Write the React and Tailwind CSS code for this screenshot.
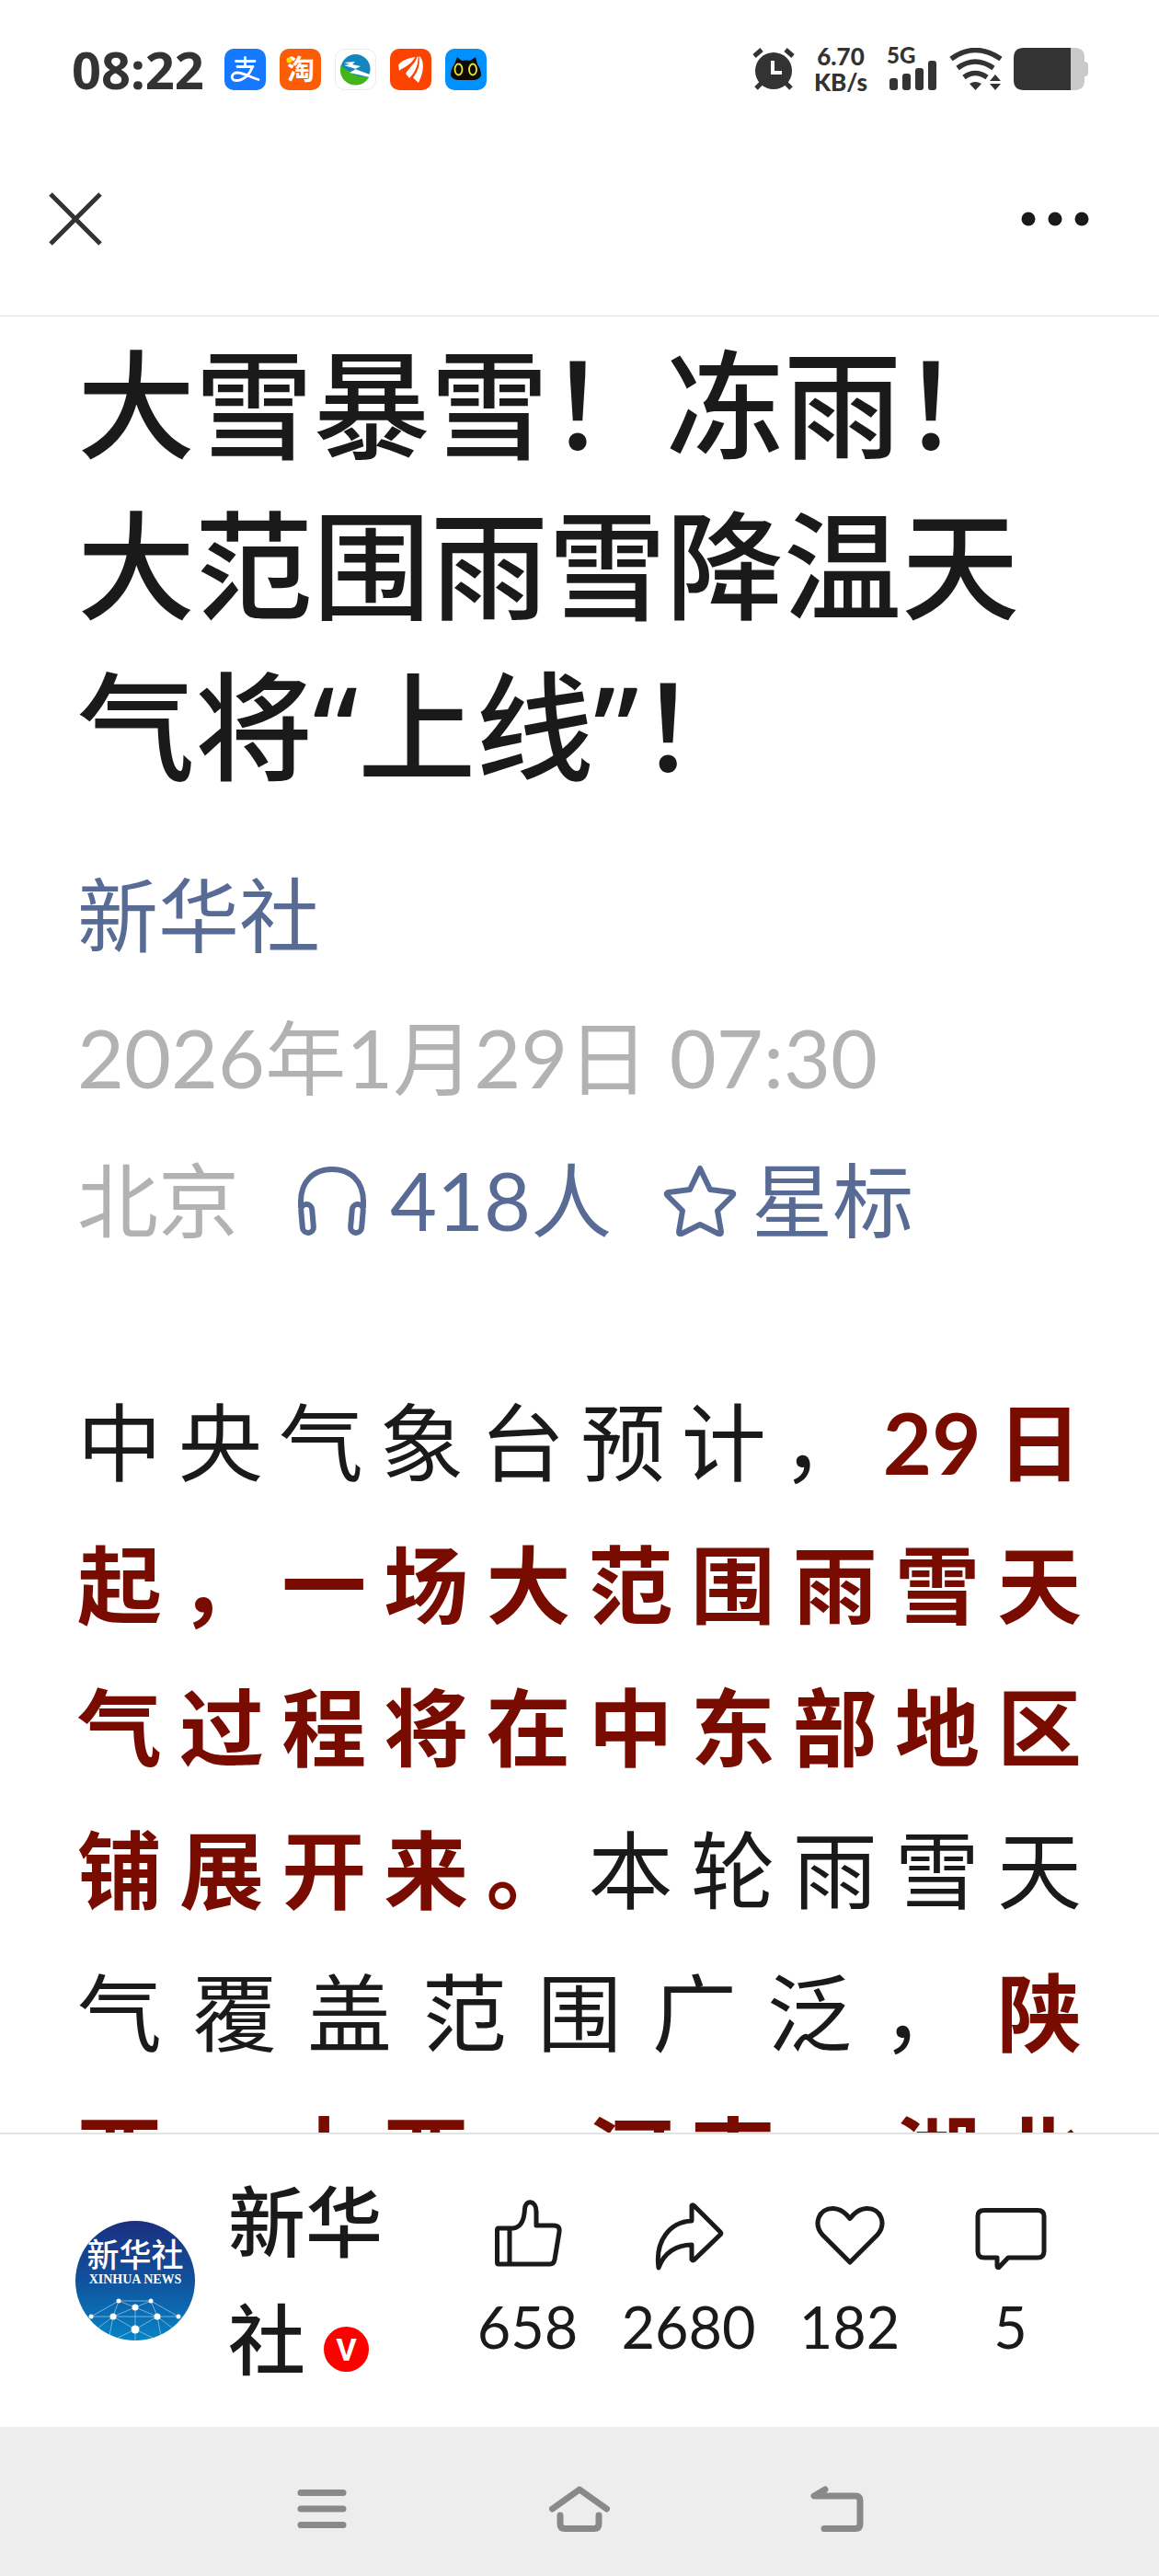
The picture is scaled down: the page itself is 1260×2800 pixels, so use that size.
const actions = [
  { id: 'like', label: '点赞', count: 658, Icon: LikeIcon },
  { id: 'share', label: '转发', count: 2680, Icon: ShareIcon },
  { id: 'heart', label: '推荐', count: 182, Icon: HeartIcon },
  { id: 'comment', label: '留言', count: 5, Icon: CommentIcon },
]

function LikeIcon() {
  return (
    <svg viewBox="0 0 80 80" className="size-20" fill="none" stroke="currentColor" strokeWidth="5" strokeLinejoin="round" strokeLinecap="round">
      <path d="M8 33H24C33 32 36 22 36.500 12C37 1.500 49 2 49 15V30H68Q75 30 74 37L69 67Q68 72 64 72H8Q6.500 72 6.500 70V35Q6.500 33 8 33Z" />
      <path d="M20 34V71" />
    </svg>
  )
}

function ShareIcon() {
  return (
    <svg viewBox="0 0 80 80" className="size-20" fill="none" stroke="currentColor" strokeWidth="5" strokeLinejoin="round">
      <path d="M43 25V8.500Q44 7 46 9L74 37Q75.500 38.500 74 40L46 67Q44 69 43 67V51C27 51 13 59 7 76C3 47 19 26 43 25Z" />
    </svg>
  )
}

function HeartIcon() {
  return (
    <svg viewBox="0 0 80 80" className="size-20" fill="none" stroke="currentColor" strokeWidth="5" strokeLinejoin="round">
      <path d="M40 70L10 40C0 28 6 11 22 11.500Q30 12 36 18L40 22.500L44 18Q50 12 58 11.500C74 11 80 28 70 40Z" />
    </svg>
  )
}

function CommentIcon() {
  return (
    <svg viewBox="0 0 80 80" className="size-20" fill="none" stroke="currentColor" strokeWidth="5" strokeLinejoin="round">
      <path d="M11 13.500H69Q76 13.500 76 20V58Q76 65 69 65H37L27 75.500Q25 76 25 74V65H11Q4 65 4 58V20Q4 13.500 11 13.500Z" />
    </svg>
  )
}

function StatusApps() {
  return (
    <div className="flex gap-[15px]">
      <svg viewBox="0 0 45 45" className="size-[45px]">
        <rect width="45" height="45" rx="10" fill="#1677ff" />
        <g fill="none" stroke="#fff" strokeWidth="2.800" strokeLinecap="round">
          <path d="M12.500 13.500H33M22.500 9.500V19M14 19.500H31" />
          <path d="M30.500 19.500C27 29 20 34.500 13 34.500C6 34.500 7 26 14 26C21 26 28 31 37 33.500" />
        </g>
      </svg>
      <svg viewBox="0 0 45 45" className="size-[45px] overflow-visible">
        <rect width="45" height="45" rx="10" fill="#fb5d07" />
        <text x="8" y="33" fontSize="30" fontWeight="700" fill="#fff" fontFamily="Noto Sans CJK SC, sans-serif">淘</text>
        <circle cx="10.500" cy="12.500" r="3" fill="#ffdf00" />
      </svg>
      <svg viewBox="0 0 45 45" className="size-[45px]">
        <rect x="0.500" y="0.500" width="44" height="44" rx="10" fill="#fff" stroke="#ebebeb" />
        <circle cx="22.500" cy="22" r="16" fill="#1286bd" />
        <path d="M7 17C8 22 17 24 21 28Q30 32 38 29A16 16 0 0 1 7 17Z" fill="#43b41c" />
        <path d="M10 15L22 14L19 17L28 19L22 22L38 28V31L16 26L23 22L10 18L16 17Z" fill="#fff" />
      </svg>
      <svg viewBox="0 0 45 45" className="size-[45px]">
        <rect width="45" height="45" rx="10" fill="#fc4300" />
        <g fill="#fff">
          <path d="M27.500 9C20 10 12 13 9 17.500L10 24C14 20 22 19 27.500 9Z" />
          <path d="M29.500 8.500C28 16 20 21 17 27L21 32C26 27 31 19 30.500 8.500Z" />
          <path d="M32.500 8.500C37.500 14 37 25 31 37L25 31.500C30 25 33 18 31.500 8.500Z" />
        </g>
      </svg>
      <svg viewBox="0 0 45 45" className="size-[45px]">
        <rect width="45" height="45" rx="10" fill="#0091ff" />
        <path d="M13 9L18 13Q22.500 12 27 13L33 9L35 17Q39 22 39 29Q37 34 30 34H15Q8 34 6 29Q6 22 10 17Z" fill="#0b0b08" />
        <g fill="none" stroke="#f1e72d" strokeWidth="1.800">
          <ellipse cx="14.500" cy="22.500" rx="4" ry="6" />
          <ellipse cx="30" cy="22.500" rx="4" ry="6" />
        </g>
      </svg>
    </div>
  )
}

function StatusBar() {
  return (
    <div className="flex h-[150px] items-center justify-between pr-[76px] pl-[78px] text-[#333]">
      <div className="flex items-center gap-5">
        <span className="w-[146px] font-['Noto_Sans',sans-serif] text-[56px] leading-[76px] font-bold">08:22</span>
        <StatusApps />
      </div>
      <div className="flex items-center">
        <svg viewBox="0 0 46 46" className="size-[46px]" stroke="#333" strokeWidth="5" fill="none">
          <circle cx="23" cy="25" r="20" fill="#333" stroke="none" />
          <path d="M2 9L10 2M44 9L36 2M10 38L4 44M36 38L42 44" />
          <path d="M22 14V27H32" stroke="#fff" strokeWidth="4" />
        </svg>
        <div className="ml-5 w-[60px] text-center text-[26px] leading-[28px] font-black">
          <div>6.70</div>
          <div>KB/s</div>
        </div>
        <svg viewBox="0 0 54 48" className="ml-5 h-12 w-[54px] overflow-visible" fill="#333">
          <text x="0" y="18" fontSize="24" fontWeight="900" fontFamily="Lato, sans-serif">5G</text>
          <rect x="3" y="34" width="9" height="13" rx="3" />
          <rect x="17" y="29" width="9" height="18" rx="3" />
          <rect x="31" y="23" width="9" height="24" rx="3" />
          <rect x="45" y="15" width="9" height="32" rx="3" />
        </svg>
        <svg viewBox="0 0 58 46" className="ml-3.5 h-[46px] w-[58px]" fill="none" stroke="#333" strokeWidth="5.500">
          <path d="M2 12Q28 -7 56 12" />
          <path d="M9 22Q28 8 48 22" />
          <path d="M16 32Q28 23 41 32" />
          <path d="M22 39Q28 35 35 39L28.500 46ZM44 36L50 29L56 36ZM44 39H56L50 46Z" fill="#333" stroke="none" />
        </svg>
        <svg viewBox="0 0 82 46" className="ml-3 h-[46px] w-[82px]">
          <path d="M60 0H68Q77 1 77 10V15Q81 15 81 19V27Q81 31 77 31V36Q77 45 68 46H60Z" fill="#c9c9c9" />
          <path d="M62 0H11Q0 0 0 11V35Q0 46 11 46H62Z" fill="#333" />
        </svg>
      </div>
    </div>
  )
}

function Header() {
  return (
    <header className="flex h-[194px] items-center justify-between border-b border-[#e0e0e0] pr-[76px] pb-[18px] pl-[53px]">
      <button type="button" aria-label="关闭">
        <svg viewBox="0 0 58 58" className="size-[58px]" stroke="#333" strokeWidth="5">
          <path d="M2 2L56 56M56 2L2 56" />
        </svg>
      </button>
      <button type="button" aria-label="更多">
        <svg viewBox="0 0 74 16" className="h-4 w-[74px]" fill="#1a1a1a">
          <circle cx="8" cy="8" r="7.500" />
          <circle cx="37" cy="8" r="7.500" />
          <circle cx="66" cy="8" r="7.500" />
        </svg>
      </button>
    </header>
  )
}

function Article() {
  return (
    <main className="min-h-0 flex-1 overflow-hidden px-[84px] pt-2">
      <h1 className="font-['Noto_Sans','Noto_Sans_CJK_SC',sans-serif] text-[128px] leading-[175px] font-medium">
        大雪暴雪！冻雨！
        <br />
        大范围雨雪降温天
        <br />
        气将“上线”！
      </h1>

      {/* Byline */}
      <div className="mt-10 text-[88px] leading-[155px] text-[#b2b2b2]">
        <a href="#author" className="text-[#576b95]">新华社</a>
        <p>2026年1月29日 07:30</p>
        <div className="flex items-center">
          <span>北京</span>
          <a href="#listen" className="ml-[62px] flex items-center gap-6 text-[#576b95]">
            <svg viewBox="0 0 78 78" className="size-[78px]" fill="none" stroke="currentColor" strokeWidth="6" strokeLinejoin="round">
              <path d="M5 47V40C5 18 19 5 39 5S73 18 73 40V47" />
              <rect x="6" y="43" width="12" height="31" rx="6" transform="rotate(-5 12 58)" />
              <rect x="60" y="43" width="12" height="31" rx="6" transform="rotate(5 66 58)" />
            </svg>
            418人
          </a>
          <a href="#star" className="ml-14 flex items-center gap-4 text-[#576b95]">
            <svg viewBox="0 0 80 80" className="size-20" fill="none" stroke="currentColor" strokeWidth="6" strokeLinejoin="round">
              <path d="M40 5L51 28L74 31Q78 32 75 35L59 51L63 74Q63 77 60 76L40 66L20 76Q17 77 17 74L21 51L5 35Q2 32 6 31L29 28Z" />
            </svg>
            星标
          </a>
        </div>
      </div>

      {/* Body */}
      <p className="mt-[108px] text-justify text-[92px] leading-[155px] [text-align-last:justify]">
        中央气象台预计，<strong className="font-bold text-[#780c00]">29日
        <br />
        起，一场大范围雨雪天
        <br />
        气过程将在中东部地区
        <br />
        铺展开来。</strong>本轮雨雪天
        <br />
        气覆盖范围广泛，<strong className="font-bold text-[#780c00]">陕
        <br />
        西、山西、河南、湖北</strong>
      </p>
    </main>
  )
}

function Avatar() {
  return (
    <svg viewBox="0 0 130 130" className="size-[130px] shrink-0 rounded-full">
      <defs>
        <linearGradient id="sky" x1="0" y1="0" x2="0" y2="1">
          <stop offset="0" stopColor="#1c2f80" />
          <stop offset="0.500" stopColor="#10529c" />
          <stop offset="1" stopColor="#0784c6" />
        </linearGradient>
      </defs>
      <rect width="130" height="130" fill="url(#sky)" />
      <g fill="#fff" textAnchor="middle">
        <text x="65" y="50" fontSize="35" fontWeight="500" fontFamily="Noto Sans CJK SC, sans-serif">新华社</text>
        <text x="65" y="68" fontSize="14" fontWeight="700" fontFamily="Liberation Serif, serif">XINHUA NEWS</text>
      </g>
      <path d="M17 104L47 87H82L112 104H17M47 87L65 94L82 87L89 104L65 118L41 104L47 87M41 104L65 94L89 104M65 94V130M41 104L36 130M89 104L94 130M65 118L40 130M65 118L90 130M41 104L20 120M89 104L110 120" fill="none" stroke="#8fc4e4" strokeWidth="0.800" />
      <g fill="#fff">
        <circle cx="47" cy="87" r="2.500" />
        <circle cx="82" cy="87" r="2.500" />
        <circle cx="65" cy="94" r="3.500" />
        <circle cx="41" cy="104" r="3.500" />
        <circle cx="89" cy="104" r="3.500" />
        <circle cx="17" cy="104" r="2.500" />
        <circle cx="112" cy="104" r="2.500" />
        <circle cx="65" cy="118" r="4.500" />
      </g>
    </svg>
  )
}

function Toolbar() {
  return (
    <footer className="flex h-[320px] shrink-0 items-center gap-9 border-t-2 border-[#e3e3e3] pr-[74px] pl-[82px]">
      <Avatar />
      <div className="w-[202px] text-[84px] leading-[128px] font-medium">
        新华社
        <span className="ml-5 inline-flex size-[49px] items-center justify-center rounded-full bg-[#ff0000] align-middle font-['Roboto',sans-serif] text-[34px] leading-none font-bold text-white">
          V
        </span>
      </div>
      <div className="grid flex-1 grid-cols-4">
        {actions.map(({ id, label, count, Icon }) => (
          <button key={id} type="button" aria-label={label} className="flex flex-col items-center gap-5 text-[63px] leading-[80px]">
            <Icon />
            {count}
          </button>
        ))}
      </div>
    </footer>
  )
}

function SystemNav() {
  return (
    <nav className="h-[162px] shrink-0 bg-[#ededed] pt-4">
      <div className="mx-auto grid h-full w-2/3 grid-cols-3 place-items-center text-[#898989]">
        <button type="button" aria-label="最近任务">
          <svg viewBox="0 0 54 50" className="h-[50px] w-[54px]" stroke="currentColor" strokeWidth="7" strokeLinecap="round">
            <path d="M4 7.500H50M4 25H50M4 42.500H50" />
          </svg>
        </button>
        <button type="button" aria-label="主屏幕">
          <svg viewBox="0 0 66 50" className="h-[50px] w-[66px]" fill="none" stroke="currentColor" strokeWidth="7" strokeLinecap="round" strokeLinejoin="round">
            <path d="M3.500 25L33 4L62.500 25M12 32V41Q12 46.500 17 46.500H49Q54 46.500 54 41V32" />
          </svg>
        </button>
        <button type="button" aria-label="返回">
          <svg viewBox="0 0 58 50" className="h-[50px] w-[58px]" fill="none" stroke="currentColor" strokeWidth="7" strokeLinecap="round" strokeLinejoin="round">
            <path d="M16 4L4 11H49Q54 11 54 16V41Q54 46.500 49 46.500H15" />
          </svg>
        </button>
      </div>
    </nav>
  )
}

function App() {
  return (
    <div className="flex h-screen flex-col bg-white font-['Lato','Noto_Sans_CJK_SC',sans-serif] text-[#1a1a1a]" lang="zh-CN">
      <StatusBar />
      <Header />
      <Article />
      <Toolbar />
      <SystemNav />
    </div>
  )
}

export default App
